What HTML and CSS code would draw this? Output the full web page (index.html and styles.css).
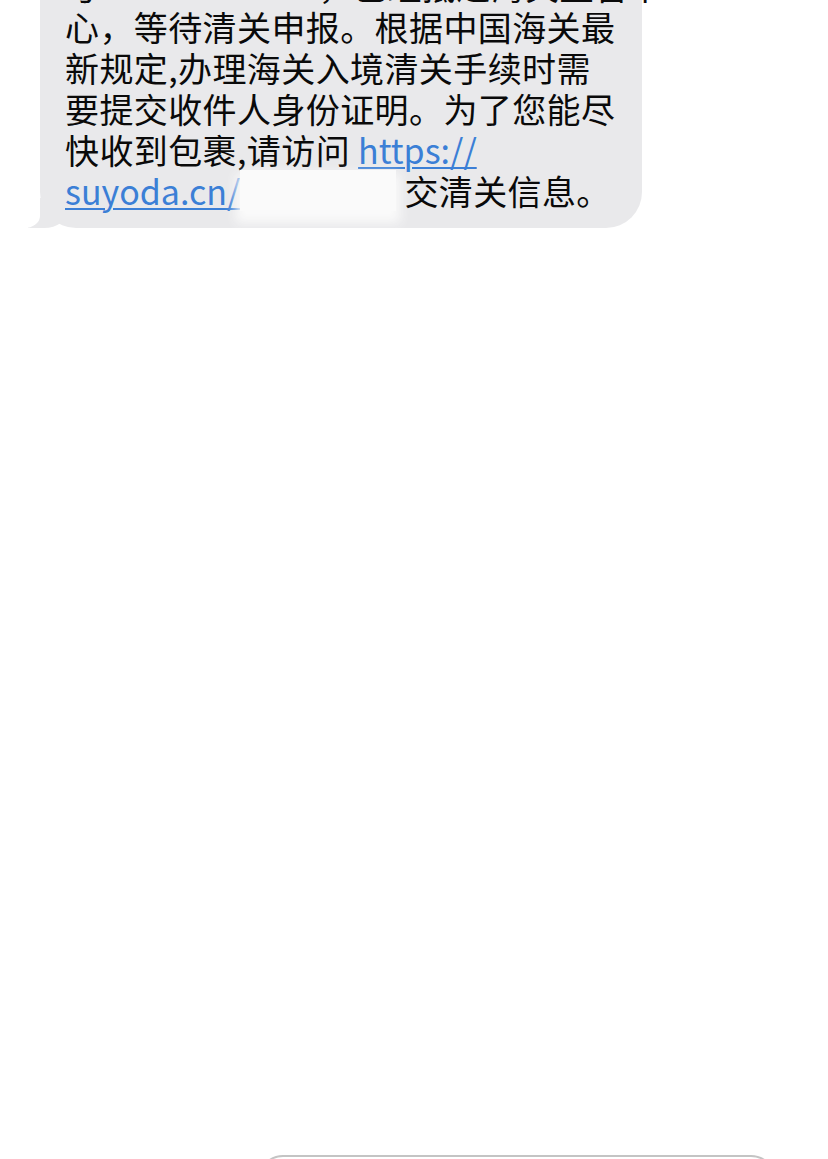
FILE: index.html
```html
<!DOCTYPE html>
<html lang="zh-CN">
  <head>
    <meta charset="UTF-8" />
    <meta name="viewport" content="width=device-width, initial-scale=1.0" />
    <title>信息</title>
    <link rel="stylesheet" href="styles.css">
  </head>
  <body>
    <main class="thread">
      <div class="bubble">
        <p class="msg">
          号1179****1202，已经抵达海关监管中<br>
          心，等待清关申报。根据中国海关最<br>
          新规定,办理海关入境清关手续时需<br>
          要提交收件人身份证明。为了您能尽<br>
          快收到包裹,请访问 <a class="link" href="#">https://</a><br>
          <a class="link" href="#">suyoda.cn/</a><span class="redact"></span>交清关信息。
        </p>
      </div>
    </main>
    <footer class="compose">
      <div class="input"></div>
    </footer>
  </body>
</html>
```

FILE: styles.css
```css
* {
  margin: 0;
  padding: 0;
  box-sizing: border-box;
}

body {
  display: flex;
  flex-direction: column;
  height: 100vh;
  overflow: hidden;
  background-color: #ffffff;
  font-family: "Noto Sans CJK SC", "Liberation Sans", sans-serif;
}

.thread {
  display: flex;
  flex-direction: column;
  align-items: flex-start;
  padding-left: 40px;
}

.bubble {
  position: relative;
  width: 602px;
  margin-top: -49px;
  padding: 14px 20px 17px 25px;
  background-color: #e9e9eb;
  border-radius: 36px;
}

/* tail at the bottom left */
.bubble::before {
  content: "";
  position: absolute;
  left: -12px;
  bottom: 0;
  width: 40px;
  height: 30px;
  background-color: #e9e9eb;
  border-bottom-right-radius: 24px 18px;
}

.bubble::after {
  content: "";
  position: absolute;
  left: -28px;
  bottom: 0;
  width: 28px;
  height: 32px;
  background-color: #ffffff;
  border-bottom-right-radius: 16px 12px;
}

.msg {
  position: relative;
  z-index: 1;
  font-size: 34px;
  line-height: 41px;
  letter-spacing: 0.4px;
  color: #0a0a0a;
  white-space: nowrap;
}

.link {
  color: #3b7fd6;
  letter-spacing: 0;
  text-decoration: underline;
  text-decoration-thickness: 2px;
  text-underline-offset: 3px;
}

.redact {
  display: inline-block;
  width: 156px;
  height: 41px;
  margin: 0 8px 0 0;
  vertical-align: top;
  background-color: #fafafa;
  box-shadow: 0 8px 10px 4px #fafafa;
}

.compose {
  display: flex;
  margin-top: auto;
  padding-left: 258px;
  height: 4px;
}

.input {
  width: 518px;
  height: 50px;
  border: 2px solid #c4c4c4;
  border-radius: 26px;
}
```
